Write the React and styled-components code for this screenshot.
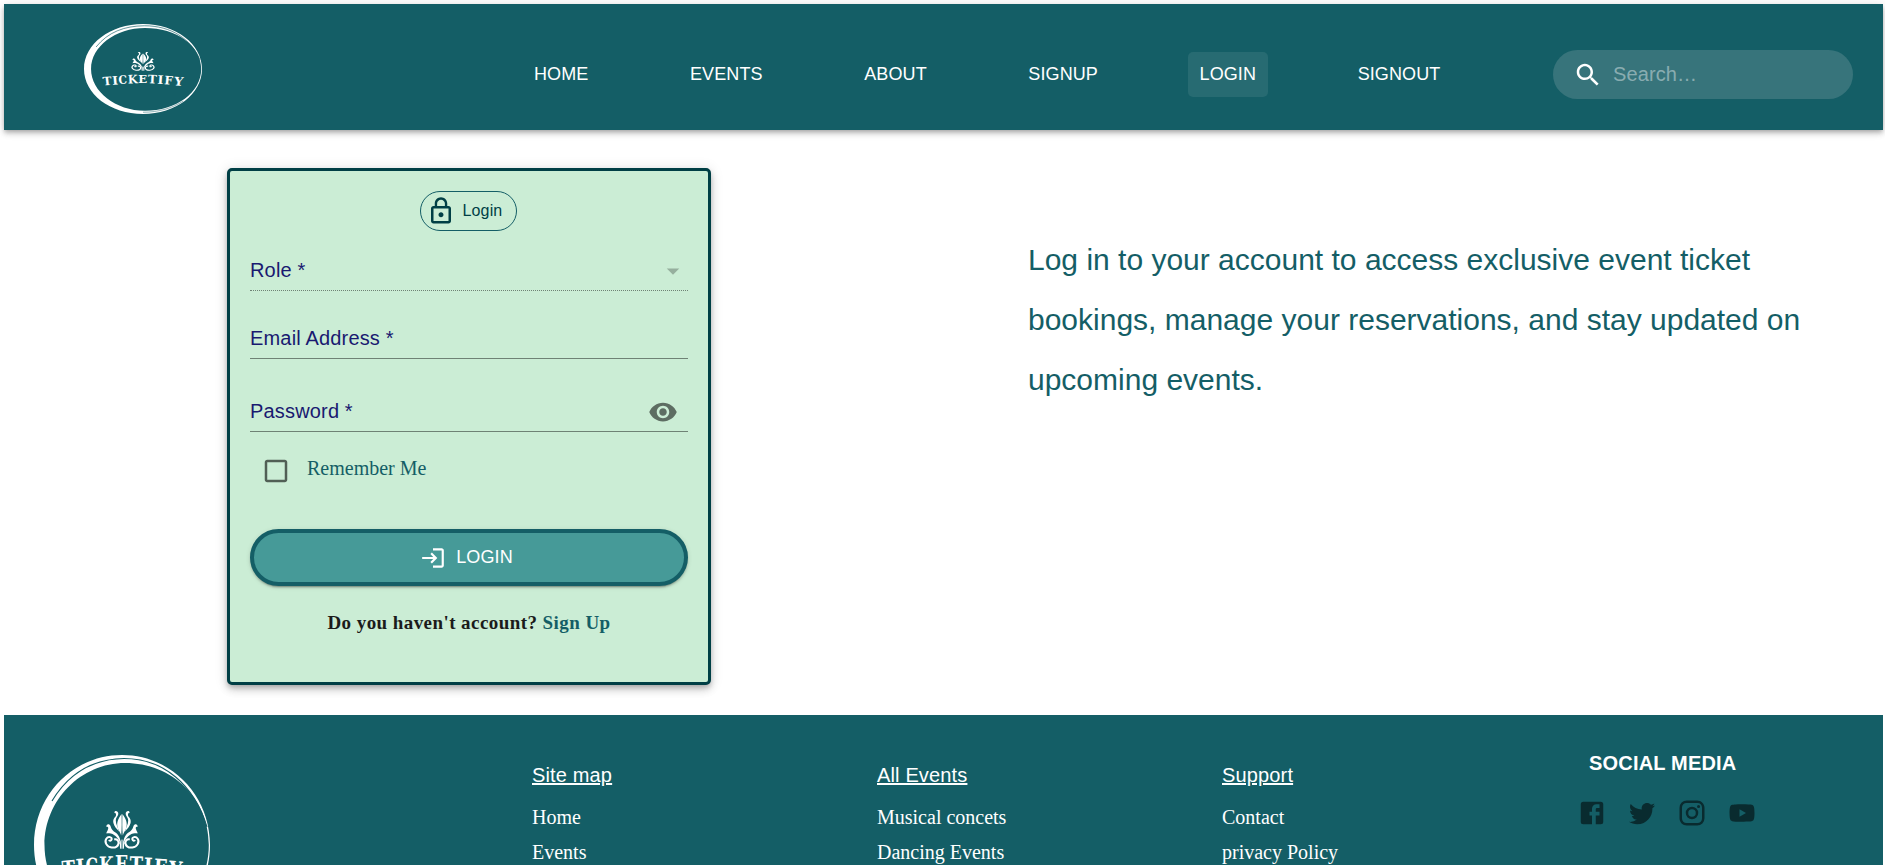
import React from "react";
import styled, { createGlobalStyle, css } from "styled-components";

const teal = "#145e66";
const darkTeal = "#003f45";
const sans = `"Liberation Sans", Arial, Helvetica, sans-serif`;
const serif = `"Liberation Serif", "Times New Roman", serif`;

const GlobalStyle = createGlobalStyle`
  * { box-sizing: border-box; }
  body { margin: 0; background: #fff; overflow: hidden; }
`;

const Page = styled.div`
  height: 865px;
  overflow: hidden;
  padding: 4px 2px 0 4px;
  font-family: ${sans};
`;

const Header = styled.header`
  display: flex;
  align-items: flex-start;
  height: 126px;
  padding: 20px 30px 0 80px;
  background: ${teal};
  box-shadow: 0 2px 4px -1px rgba(0, 0, 0, 0.2), 0 4px 5px rgba(0, 0, 0, 0.14),
    0 1px 10px rgba(0, 0, 0, 0.12);
`;

const Nav = styled.nav`
  display: flex;
  gap: 77.6px;
  margin: 28px 0 0 320px;
`;

const NavButton = styled.button`
  height: 45px;
  padding: 0 12px;
  border: 0;
  border-radius: 5px;
  background: ${(p) => (p.$active ? "#276b72" : "transparent")};
  color: #fff;
  font: 18px ${sans};
  letter-spacing: 0.1px;
`;

const SearchBox = styled.label`
  display: flex;
  align-items: center;
  width: 300px;
  height: 49px;
  margin: 26px 0 0 auto;
  padding-left: 20px;
  border-radius: 25px;
  background: #37747b;
  color: #fff;
`;

const SearchInput = styled.input`
  width: 220px;
  margin-left: 10px;
  padding: 0;
  border: 0;
  outline: 0;
  background: transparent;
  color: #fff;
  font: 20px ${sans};
  letter-spacing: 0.1px;
  &::placeholder { color: rgba(255, 255, 255, 0.42); opacity: 1; }
`;

const Main = styled.main`
  display: flex;
  align-items: flex-start;
  height: 585px;
  padding: 38px 0 0 223px;
`;

const Card = styled.form`
  display: flex;
  flex-direction: column;
  width: 484px;
  height: 517px;
  padding: 20px;
  border: 3px solid ${darkTeal};
  border-radius: 5px;
  background: #cbedd5;
  box-shadow: 0 3px 5px -1px rgba(0, 0, 0, 0.2), 0 5px 8px rgba(0, 0, 0, 0.14),
    0 1px 14px rgba(0, 0, 0, 0.12);
`;

const Chip = styled.div`
  display: flex;
  align-items: center;
  align-self: center;
  width: 97px;
  height: 40px;
  margin-right: 1px;
  padding-left: 5px;
  border: 1px solid ${teal};
  border-radius: 20px;
  color: ${darkTeal};
  font-size: 16px;
`;

const ChipText = styled.span`
  margin-left: 6.5px;
  letter-spacing: 0.15px;
`;

const Field = styled.div`
  display: flex;
  justify-content: space-between;
  height: 48px;
  margin-top: ${(p) => p.$gap}px;
  padding-top: 15px;
  border-bottom: 1px ${(p) => (p.$disabled ? "dotted" : "solid")} rgba(0, 0, 0, 0.45);
`;

const FieldLabel = styled.label`
  color: #191970;
  font-size: 20px;
  line-height: 24px;
  letter-spacing: 0.17px;
`;

const RequiredMark = styled.span`
  margin-left: 5.6px;
`;

const FieldIcon = styled.span`
  display: flex;
  height: 30px;
  margin: -2px ${(p) => p.$right || 0}px 0 0;
  color: rgba(0, 0, 0, ${(p) => p.$alpha});
`;

const Remember = styled.label`
  display: flex;
  align-items: flex-start;
  height: 30px;
  margin-top: 24px;
  padding-left: 11px;
  color: rgba(0, 0, 0, 0.6);
`;

const RememberText = styled.span`
  margin-left: 16px;
  color: ${teal};
  font: 20px/24px ${serif};
`;

const Submit = styled.button`
  display: flex;
  align-items: center;
  justify-content: center;
  flex: none;
  height: 57px;
  margin-top: 43px;
  padding: 0 5px 0 0;
  border: 4px solid ${teal};
  border-radius: 29px;
  background: #469a98;
  color: #fff;
  font: 18px ${sans};
  box-shadow: 0 3px 1px -2px rgba(0, 0, 0, 0.2), 0 2px 2px rgba(0, 0, 0, 0.14),
    0 1px 5px rgba(0, 0, 0, 0.12);
`;

const SubmitText = styled.span`
  margin-left: 10px;
  letter-spacing: 0.1px;
`;

const SignupLine = styled.p`
  margin: 25px 0 0;
  color: #1b1b1b;
  text-align: center;
  font: bold 19px/24px ${serif};
  letter-spacing: 0.43px;
`;

const SignupLink = styled.a`
  color: ${teal};
`;

const Intro = styled.p`
  width: 800px;
  margin: 62px 0 0 317px;
  color: ${teal};
  font-size: 30px;
  line-height: 60px;
`;

const Footer = styled.footer`
  display: grid;
  grid-template-columns: 498px 345px 345px 355px 1fr;
  height: 320px;
  padding-left: 30px;
  background: ${teal};
  color: #fff;
`;

const FooterBrand = styled.div`
  padding-top: 40px;
`;

const FooterColumn = styled.div`
  padding-top: 48px;
`;

const FooterHeading = styled.h3`
  margin: 0 0 13px;
  font-size: 20px;
  font-weight: 400;
  line-height: 24px;
  letter-spacing: 0.15px;
  text-decoration: underline;
`;

const FooterLink = styled.a`
  display: block;
  font: 20px/35px ${serif};
`;

const Social = styled.div`
  padding-top: 36px;
`;

const SocialTitle = styled.h3`
  margin: 0 0 23px 12px;
  font-size: 20px;
  line-height: 24px;
  letter-spacing: 0.19px;
`;

const SocialIcons = styled.div`
  display: flex;
  gap: 20px;
  color: rgba(0, 0, 0, 0.54);
`;

const LogoSvg = styled.svg`
  display: block;
  flex: none;
  ${(p) =>
    p.$large
      ? css`width: 176px; height: 180px;`
      : css`width: 118px; height: 90px;`}
`;

const LogoLetter = styled.text`
  font: bold 23.5px "DejaVu Serif", ${serif};
  text-anchor: middle;
`;

const letters = [
  ["T", 35.3, 122.5, -5, 0.76], ["I", 46.9, 121, -4, 0.8], ["C", 58.3, 119.8, -3, 0.68],
  ["K", 72.8, 118.6, -2, 0.72], ["E", 87.6, 118.2, 0, 0.74], ["T", 101.8, 118.6, 2, 0.76],
  ["I", 113.6, 119.8, 3, 0.8], ["F", 125.5, 121, 4, 0.76], ["Y", 140.6, 123, 5, 0.8],
];

const HalfOrnament = () => (
  <g>
    <path d="M87.600 59c-3.600 4.500-5.400 9.500-3.800 14 .9 3 2.600 4.500 3.400 7.500.7-7 .5-14 .4-21.500z" />
    <path d="M84.300 58.500c0-3-4-3.500-4-.8 1.200-.2 1.900.8 1.700 2.600-.2 2-3.500 3-2.600 7.700.9 4 3.400 5.500 5.600 8.500-.8-4-3.300-7-3.200-11 .2-3.500 2.500-4 2.500-7z" />
    <path d="M76.500 71c-1-3-4.800-2-4 1 1.500-.6 2.200.6 1.500 2.300-.7 2.300-1.800 2.800-1.500 4.300 3.500-1.200 6.500 0 9 2.500 2.400 2.400 4 5 5.300 8-.2-6-2.500-9.500-5.300-11.500-2.200-1.600-4.300-3.100-5-6.600z" />
    <path
      d="M84.800 89c.3-3-2-5.500-4.600-4.500M84.600 86.500c.5 5-3.500 6.500-7 6-5-.6-7.400-5.500-5.300-8.700 2-3 6-1.700 5.300.7-.4 1.500-2.200 1.400-2.500.4"
      fill="none" stroke="#fff" strokeWidth="2"
    />
    <path d="M87.500 84c-1.500 3-2 6.500-1.300 9.700h1.300z" />
  </g>
);

const Logo = ({ large }) => (
  <LogoSvg $large={large} viewBox="0 0 176 180" preserveAspectRatio="none" fill="#fff">
    <path
      fillRule="evenodd"
      d="M88 0C137 0 176 40 176 90S137 180 88 180 0 140 0 90 39 0 88 0zM91 8C47 8 10.500 45 10.500 90S47 173.500 91 173.500C138 173.500 174.800 137 174.800 90S138 8 91 8z"
    />
    <path d="M18 46C36 16 60 4 90 3.500C130 3.500 160 30 173 72" fill="none" stroke={teal} strokeWidth="1.100" />
    <path d="M88 176.500C112 176.500 132 168 148 154" fill="none" stroke={teal} strokeWidth=".8" />
    <HalfOrnament />
    <g transform="translate(176 0) scale(-1 1)"><HalfOrnament /></g>
    {letters.map(([ch, x, y, angle, narrow], i) => (
      <LogoLetter key={i} transform={`translate(${x} ${y}) rotate(${angle}) scale(${narrow} 1)`}>
        {ch}
      </LogoLetter>
    ))}
  </LogoSvg>
);

const Icon = ({ d, size = 30 }) => (
  <svg width={size} height={size} viewBox="0 0 24 24" fill="currentColor">
    <path d={d} />
  </svg>
);

const icons = {
  search: "M15.500 14h-.79l-.28-.27C15.410 12.590 16 11.110 16 9.500 16 5.910 13.090 3 9.500 3S3 5.910 3 9.500 5.910 16 9.500 16c1.610 0 3.090-.59 4.230-1.570l.27.28v.79l5 4.990L20.490 19l-4.990-5zm-6 0C7.010 14 5 11.990 5 9.500S7.010 5 9.500 5 14 7.010 14 9.500 11.990 14 9.500 14z",
  lock: "M12 17c1.100 0 2-.9 2-2s-.9-2-2-2-2 .9-2 2 .9 2 2 2zm6-9h-1V6c0-2.760-2.240-5-5-5S7 3.240 7 6v2H6c-1.100 0-2 .9-2 2v10c0 1.100.9 2 2 2h12c1.100 0 2-.9 2-2V10c0-1.100-.9-2-2-2zM8.900 6c0-1.710 1.390-3.100 3.100-3.100s3.100 1.390 3.100 3.100v2H8.900V6zM18 20H6V10h12v10z",
  arrow: "M7 10l5 5 5-5z",
  eye: "M12 4.500C7 4.500 2.730 7.610 1 12c1.730 4.390 6 7.500 11 7.500s9.270-3.110 11-7.500c-1.730-4.390-6-7.500-11-7.500zM12 17c-2.760 0-5-2.240-5-5s2.240-5 5-5 5 2.240 5 5-2.240 5-5 5zm0-8c-1.660 0-3 1.340-3 3s1.340 3 3 3 3-1.340 3-3-1.340-3-3-3z",
  checkbox: "M19 5v14H5V5h14m0-2H5c-1.100 0-2 .9-2 2v14c0 1.100.9 2 2 2h14c1.100 0 2-.9 2-2V5c0-1.100-.9-2-2-2z",
  login: "M11 7 9.600 8.400l2.600 2.600H2v2h10.200l-2.600 2.600L11 17l5-5-5-5zm9 12h-8v2h8c1.100 0 2-.9 2-2V5c0-1.100-.9-2-2-2h-8v2h8v14z",
  facebook: "M5 3h14a2 2 0 0 1 2 2v14a2 2 0 0 1-2 2H5a2 2 0 0 1-2-2V5a2 2 0 0 1 2-2m13 2h-2.500A3.500 3.500 0 0 0 12 8.500V11h-2v3h2v7h3v-7h3v-3h-3V9a1 1 0 0 1 1-1h2V5z",
  twitter: "M22.460 6c-.77.35-1.600.58-2.460.69.88-.53 1.560-1.370 1.880-2.380-.83.5-1.750.85-2.720 1.050C18.370 4.500 17.260 4 16 4c-2.350 0-4.270 1.920-4.270 4.290 0 .34.04.67.11.98C8.280 9.090 5.110 7.380 3 4.790c-.37.63-.58 1.370-.58 2.150 0 1.490.75 2.810 1.910 3.560-.71 0-1.370-.2-1.950-.5v.03c0 2.080 1.480 3.820 3.440 4.210a4.220 4.220 0 0 1-1.930.07 4.280 4.280 0 0 0 4 2.980 8.521 8.521 0 0 1-5.330 1.840c-.34 0-.68-.02-1.020-.06C3.440 20.290 5.700 21 8.120 21 16 21 20.330 14.460 20.330 8.790c0-.19 0-.37-.01-.56.84-.6 1.560-1.360 2.140-2.230z",
  instagram: "M7.800 2h8.400C19.400 2 22 4.600 22 7.800v8.400a5.800 5.800 0 0 1-5.800 5.800H7.800C4.600 22 2 19.400 2 16.200V7.800A5.800 5.800 0 0 1 7.800 2m-.2 2A3.600 3.600 0 0 0 4 7.600v8.800C4 18.390 5.610 20 7.600 20h8.800a3.600 3.600 0 0 0 3.600-3.600V7.600C20 5.610 18.390 4 16.400 4H7.600m9.650 1.500a1.250 1.250 0 0 1 1.250 1.250A1.250 1.250 0 0 1 17.250 8 1.250 1.250 0 0 1 16 6.750a1.250 1.250 0 0 1 1.250-1.250M12 7a5 5 0 0 1 5 5 5 5 0 0 1-5 5 5 5 0 0 1-5-5 5 5 0 0 1 5-5m0 2a3 3 0 0 0-3 3 3 3 0 0 0 3 3 3 3 0 0 0 3-3 3 3 0 0 0-3-3z",
  youtube: "M10 15l5.190-3L10 9v6m11.560-7.830c.13.47.22 1.100.28 1.900.07.8.1 1.490.1 2.090L22 12c0 2.190-.16 3.800-.44 4.830-.25.9-.83 1.480-1.730 1.730-.47.13-1.330.22-2.650.28-1.300.07-2.490.1-3.590.1L12 19c-4.190 0-6.800-.16-7.830-.44-.9-.25-1.480-.83-1.730-1.730-.13-.47-.22-1.100-.28-1.900-.07-.8-.1-1.490-.1-2.090L2 12c0-2.190.16-3.800.44-4.830.25-.9.83-1.480 1.730-1.730.47-.13 1.330-.22 2.650-.28 1.300-.07 2.490-.1 3.590-.1L12 5c4.190 0 6.800.16 7.830.44.9.25 1.480.83 1.730 1.730z",
};

const footerColumns = [
  { title: "Site map", links: ["Home", "Events"] },
  { title: "All Events", links: ["Musical concets", "Dancing Events"] },
  { title: "Support", links: ["Contact", "privacy Policy"] },
];

export default function App() {
  return (
    <Page>
      <GlobalStyle />
      <Header>
        <Logo />
        <Nav>
          {["HOME", "EVENTS", "ABOUT", "SIGNUP", "LOGIN", "SIGNOUT"].map((name) => (
            <NavButton key={name} $active={name === "LOGIN"}>{name}</NavButton>
          ))}
        </Nav>
        <SearchBox>
          <Icon d={icons.search} />
          <SearchInput placeholder="Search…" />
        </SearchBox>
      </Header>
      <Main>
        <Card onSubmit={(e) => e.preventDefault()}>
          <Chip>
            <Icon d={icons.lock} />
            <ChipText>Login</ChipText>
          </Chip>
          <Field $gap={12} $disabled>
            <FieldLabel>Role<RequiredMark>*</RequiredMark></FieldLabel>
            <FieldIcon $alpha={0.26}><Icon d={icons.arrow} /></FieldIcon>
          </Field>
          <Field $gap={20}>
            <FieldLabel>Email Address<RequiredMark>*</RequiredMark></FieldLabel>
          </Field>
          <Field $gap={25}>
            <FieldLabel>Password<RequiredMark>*</RequiredMark></FieldLabel>
            <FieldIcon $alpha={0.54} $right={10}><Icon d={icons.eye} /></FieldIcon>
          </Field>
          <Remember>
            <Icon d={icons.checkbox} />
            <RememberText>Remember Me</RememberText>
          </Remember>
          <Submit>
            <Icon d={icons.login} size={26} />
            <SubmitText>LOGIN</SubmitText>
          </Submit>
          <SignupLine>
            Do you haven't account? <SignupLink>Sign Up</SignupLink>
          </SignupLine>
        </Card>
        <Intro>
          Log in to your account to access exclusive event ticket bookings, manage your
          reservations, and stay updated on upcoming events.
        </Intro>
      </Main>
      <Footer>
        <FooterBrand><Logo large /></FooterBrand>
        {footerColumns.map(({ title, links }) => (
          <FooterColumn key={title}>
            <FooterHeading>{title}</FooterHeading>
            {links.map((link) => <FooterLink key={link}>{link}</FooterLink>)}
          </FooterColumn>
        ))}
        <Social>
          <SocialTitle>SOCIAL MEDIA</SocialTitle>
          <SocialIcons>
            <Icon d={icons.facebook} />
            <Icon d={icons.twitter} />
            <Icon d={icons.instagram} />
            <Icon d={icons.youtube} />
          </SocialIcons>
        </Social>
      </Footer>
    </Page>
  );
}
